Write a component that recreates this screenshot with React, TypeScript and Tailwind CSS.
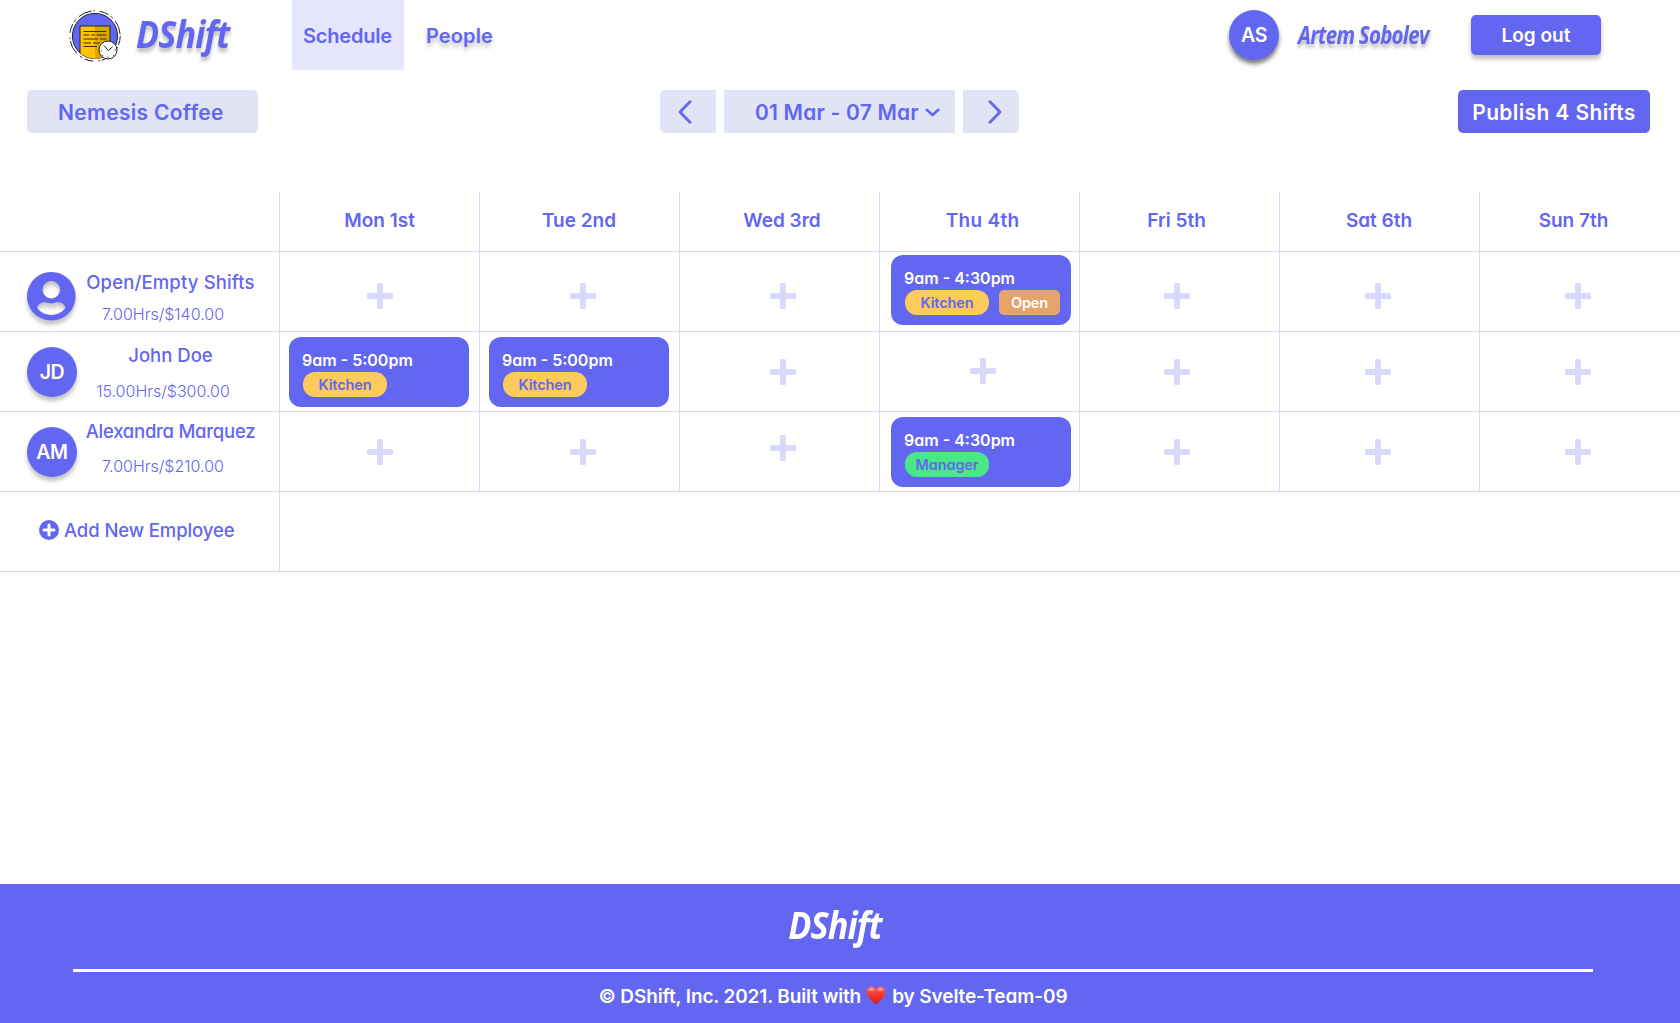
import type { ReactNode } from "react";
import clsx from "clsx";

function LogoMark() {
  return (
    <svg className="mt-px h-[52px] w-[52px]" viewBox="0 0 52 52" fill="none">
      <circle cx="26" cy="26" r="25.2" stroke="#22232f" strokeWidth="1" strokeDasharray="9 2.5 3 4 14 2 1.5 5" />
      <circle cx="26" cy="26" r="22.6" fill="#6366f1" stroke="#22232f" strokeWidth="1" />
      <path d="M11 16H41V42.8A22.2 22.2 0 0 1 11 42.8Z" fill="#ffc400" />
      <path d="M26 16H41V42.8A22.2 22.2 0 0 1 26 48.4Z" fill="#dca600" />
      <path d="M11 42.8V16H41V42.8" stroke="#22232f" strokeWidth="1" />
      <path
        d="M14.5 21.5H37.5M14.5 25H20M22 25H26M27.500 25H37.500M14.500 29H29M31 29H37.500M14.500 33H22M24 33H31M14.500 36.500H28"
        stroke="#3a2f10"
        strokeWidth="1"
      />
      <circle cx="39" cy="40" r="9" fill="#fff" stroke="#22232f" strokeWidth="1" />
      <path d="M35 35.500L39 40.500L43.500 37" stroke="#22232f" strokeWidth="1" />
      <path d="M39 48V46.500M33 46L34.200 45M31.500 41H33M45.200 46L44 45M46.800 40H45.300" stroke="#22232f" strokeWidth=".8" />
    </svg>
  );
}

function PersonIcon() {
  return (
    <svg
      className="h-[49px] w-[49px] overflow-visible drop-shadow-[0_4px_2px_rgba(0,0,0,0.25)]"
      viewBox="0 0 49 49"
      fill="#6366f1"
      fillRule="evenodd"
    >
      <path d="M24.300 0A24.300 24.300 0 1 1 24.290 0ZM24.300 9A8.700 8.700 0 1 0 24.310 9ZM10 35.600C11.500 31.500 15 30 17.500 30.200C20 30.400 21.500 31.400 24.300 31.400C27 31.400 28.500 30.400 31 30.200C33.500 30 37 31.500 38.600 35.600C36 40 30.500 43 24.300 43C18 43 12.500 40 10 35.600Z" />
    </svg>
  );
}

function PlusIcon() {
  return (
    <svg className="h-[26px] w-[26px] shrink-0" viewBox="0 0 26 26" fill="#d9d9fc">
      <path d="M11.600 0H14.400Q16 0 16 1.600V10H24.400Q26 10 26 11.600V14.400Q26 16 24.400 16H16V24.400Q16 26 14.400 26H11.600Q10 26 10 24.400V16H1.600Q0 16 0 14.400V11.600Q0 10 1.600 10H10V1.600Q10 0 11.600 0Z" />
    </svg>
  );
}

function Avatar({ initials, className }: { initials: string; className?: string }) {
  return (
    <div
      className={clsx(
        "flex h-[50px] w-[50px] shrink-0 items-center justify-center rounded-full bg-[#6366f1] pt-0.5 text-[19.500px] font-semibold tracking-[-0.4px] text-white",
        className,
      )}
    >
      {initials}
    </div>
  );
}

function ShiftCard({ time, className, children }: { time: string; className: string; children: ReactNode }) {
  return (
    <div className={clsx("h-[70px] w-[180px] rounded-xl bg-[#6366f1] pt-[13px] pl-[13px]", className)}>
      <p className="text-base leading-5 font-semibold whitespace-nowrap text-white">{time}</p>
      <div className="mt-0.5 ml-px flex gap-2.5 text-[14.500px] font-semibold tracking-[-0.1px]">{children}</div>
    </div>
  );
}

function Role({ name, className }: { name: string; className: string }) {
  return (
    <span className={clsx("flex h-[25px] w-[84px] items-center justify-center rounded-xl pt-px text-[#6366f1]", className)}>
      {name}
    </span>
  );
}

function Cell({ className, children }: { className?: string; children?: ReactNode }) {
  return <div className={clsx("flex border-r border-b border-[#d8d8fb]", className)}>{children}</div>;
}

function EmptyCell({ className }: { className: string }) {
  return (
    <Cell className={clsx("items-center justify-center", className)}>
      <PlusIcon />
    </Cell>
  );
}

function Employee({
  avatar,
  name,
  hours,
  avatarTop,
  nameTop,
  gap,
  tracking,
}: {
  avatar: ReactNode;
  name: string;
  hours: string;
  avatarTop: string;
  nameTop: string;
  gap: string;
  tracking?: string;
}) {
  return (
    <Cell className="pl-[27px]">
      <div className={clsx("w-[50px] shrink-0", avatarTop)}>{avatar}</div>
      <div className={clsx("flex w-[187px] flex-col items-center whitespace-nowrap", nameTop)}>
        <p className={clsx("text-[18.500px] leading-6 font-medium", tracking)}>{name}</p>
        <p className={clsx("pr-[15px] text-base leading-5 font-light", gap)}>{hours}</p>
      </div>
    </Cell>
  );
}

const days = [
  { label: "Mon 1st", className: "" },
  { label: "Tue 2nd", className: "pr-px" },
  { label: "Wed 3rd", className: "pl-[5px]" },
  { label: "Thu 4th", className: "pl-1.5 tracking-[0.3px]" },
  { label: "Fri 5th", className: "pr-1.5" },
  { label: "Sat 6th", className: "pr-px" },
  { label: "Sun 7th", className: "border-r-0 pr-[13px]" },
];

export default function App() {
  return (
    <div className="flex h-[1023px] w-[1680px] flex-col overflow-hidden bg-white font-['Inter',sans-serif] text-[#6366f1] [font-feature-settings:'cv11']">
      <header className="flex h-[70px] items-center">
        <div className="ml-[69px] flex w-[223px] items-center">
          <LogoMark />
          <span className="ml-[15px] inline-block origin-left scale-x-[.9] pb-1 font-['Open_Sans',sans-serif] text-[38px] leading-none font-bold tracking-[-1px] italic [text-shadow:0_4px_4px_rgba(0,0,0,0.25)]">
            DShift
          </span>
        </div>
        <nav className="flex h-full items-center text-xl font-semibold">
          <a className="flex h-full w-28 items-center justify-center bg-[#e6e6fc] pt-px pr-px tracking-[-0.2px]">Schedule</a>
          <a className="ml-[22px] pt-px tracking-[0.1px] [text-shadow:0_4px_4px_rgba(0,0,0,0.25)]">People</a>
        </nav>
        <div className="ml-auto flex items-center pr-[79px]">
          <Avatar initials="AS" className="shadow-[0_4px_4px_rgba(0,0,0,0.5)]" />
          <span className="ml-[19px] inline-block w-[173px] origin-left scale-x-[.82] pb-0.5 font-['Open_Sans',sans-serif] text-[25px] leading-none font-bold tracking-[-0.9px] whitespace-nowrap italic [text-shadow:0_4px_4px_rgba(0,0,0,0.25)]">
            Artem Sobolev
          </span>
          <button className="h-10 w-[130px] rounded-[5px] bg-[#6366f1] pt-0.5 text-[19px] font-semibold text-white shadow-[0_4px_4px_rgba(0,0,0,0.25)]">
            Log out
          </button>
        </div>
      </header>

      <div className="mt-5 flex h-[43px] pr-[30px] pl-[27px] text-[21px] font-semibold">
        <div className="flex w-[231px] items-center rounded-[5px] bg-[#e1e4f4] pt-0.5 pl-[31px] tracking-[0.3px]">Nemesis Coffee</div>
        <div className="mr-auto ml-[402px] flex gap-2">
          <button className="flex w-14 items-center rounded-l-[5px] bg-[#e1e4f4] pl-[18px]">
            <svg className="h-6 w-3.5" viewBox="0 0 14 24" fill="none" stroke="#6366f1" strokeWidth="2.800" strokeLinecap="round" strokeLinejoin="round">
              <path d="M12 1.800L2 12L12 22.200" />
            </svg>
          </button>
          <div className="flex w-[231px] items-center bg-[#e1e4f4] pt-0.5 pl-[31px] tracking-[0.2px] whitespace-nowrap">
            01 Mar - 07 Mar
            <svg className="ml-1.5 h-[9px] w-[15px]" viewBox="0 0 15 9" fill="none" stroke="#6366f1" strokeWidth="2.600" strokeLinecap="round" strokeLinejoin="round">
              <path d="M1.700 1.800L7.500 7L13.300 1.800" />
            </svg>
          </div>
          <button className="flex w-14 items-center rounded-r-[5px] bg-[#e1e4f4] pl-[25px]">
            <svg className="h-6 w-3.5" viewBox="0 0 14 24" fill="none" stroke="#6366f1" strokeWidth="2.800" strokeLinecap="round" strokeLinejoin="round">
              <path d="M2 1.800L12 12L2 22.200" />
            </svg>
          </button>
        </div>
        <button className="w-48 rounded-[5px] bg-[#6366f1] pt-0.5 tracking-[0.37px] text-white">Publish 4 Shifts</button>
      </div>

      <main className="mt-[59px] grid grid-cols-[280px_repeat(7,200px)] grid-rows-[60px_80px_80px_80px_80px]">
        <Cell />
        {days.map((day) => (
          <Cell key={day.label} className={clsx("items-center justify-center pb-px text-[19px] font-semibold", day.className)}>
            {day.label}
          </Cell>
        ))}

        <Employee
          avatar={<PersonIcon />}
          name="Open/Empty Shifts"
          hours="7.00Hrs/$140.00"
          avatarTop="pt-5"
          nameTop="pt-[18px]"
          gap="mt-2.5"
          tracking="tracking-[0.15px]"
        />
        <EmptyCell className="pt-[9px] pl-px" />
        <EmptyCell className="pt-[9px] pl-[7px]" />
        <EmptyCell className="pt-[9px] pl-[7px]" />
        <Cell className="pt-[3px] pl-[11px]">
          <ShiftCard time="9am - 4:30pm" className="shrink-0">
            <Role name="Kitchen" className="bg-[#fdca5c]" />
            <span className="flex w-[61px] items-center justify-center rounded-[5px] bg-[#e4a46c] pt-px text-white">Open</span>
          </ShiftCard>
        </Cell>
        <EmptyCell className="pt-[9px] pr-[5px]" />
        <EmptyCell className="pt-[9px] pr-[3px]" />
        <EmptyCell className="border-r-0 pt-[9px] pr-1" />

        <Employee
          avatar={<Avatar initials="JD" className="shadow-[0_4px_4px_rgba(0,0,0,0.25)]" />}
          name="John Doe"
          hours="15.00Hrs/$300.00"
          avatarTop="pt-[15px]"
          nameTop="pt-[11px]"
          gap="mt-3.5"
        />
        <Cell className="pt-[5px] pl-[9px]">
          <ShiftCard time="9am - 5:00pm" className="shrink-0">
            <Role name="Kitchen" className="bg-[#fdca5c]" />
          </ShiftCard>
        </Cell>
        <Cell className="pt-[5px] pl-[9px]">
          <ShiftCard time="9am - 5:00pm" className="shrink-0">
            <Role name="Kitchen" className="bg-[#fdca5c]" />
          </ShiftCard>
        </Cell>
        <EmptyCell className="pt-px pl-[7px]" />
        <EmptyCell className="pb-px pl-[7px]" />
        <EmptyCell className="pt-px pr-[5px]" />
        <EmptyCell className="pt-px pr-[3px]" />
        <EmptyCell className="border-r-0 pt-px pr-1" />

        <Employee
          avatar={<Avatar initials="AM" className="shadow-[0_4px_4px_rgba(0,0,0,0.25)]" />}
          name="Alexandra Marquez"
          hours="7.00Hrs/$210.00"
          avatarTop="pt-[15px]"
          nameTop="pt-[7px]"
          gap="mt-[13px]"
          tracking="tracking-[-0.25px]"
        />
        <EmptyCell className="pt-px pl-px" />
        <EmptyCell className="pt-px pl-[7px]" />
        <EmptyCell className="pb-[7px] pl-[7px]" />
        <Cell className="pt-[5px] pl-[11px]">
          <ShiftCard time="9am - 4:30pm" className="shrink-0">
            <Role name="Manager" className="bg-[#49e887]" />
          </ShiftCard>
        </Cell>
        <EmptyCell className="pt-px pr-[5px]" />
        <EmptyCell className="pt-px pr-[3px]" />
        <EmptyCell className="border-r-0 pt-px pr-1" />

        <Cell className="items-center pb-[3px] pl-[39px]">
          <svg className="h-5 w-5" viewBox="0 0 20 20">
            <circle cx="10" cy="10" r="10" fill="#6366f1" />
            <path d="M10 5V15M5 10H15" stroke="#fff" strokeWidth="3" strokeLinecap="round" />
          </svg>
          <span className="ml-[5px] pt-px text-[18.500px] font-medium tracking-[-0.1px] whitespace-nowrap">Add New Employee</span>
        </Cell>
        <Cell className="col-span-7 border-r-0" />
      </main>

      <footer className="mt-auto flex h-[139px] flex-col items-center bg-[#6366f1] px-[73px] text-white">
        <span className="mt-[21px] mr-[11px] inline-block scale-x-[.9] font-['Open_Sans',sans-serif] text-[38px] leading-none font-bold tracking-[-1px] italic">
          DShift
        </span>
        <div className="mt-[26px] mr-3.5 h-[2.500px] w-[1520px] shrink-0 bg-white" />
        <p className="mt-[14px] mr-[14px] flex h-6 items-center text-[19px] font-semibold whitespace-nowrap">
          <span className="tracking-[-0.14px]">© DShift, Inc. 2021. Built with</span>
          <svg className="mr-[6px] mb-1 ml-[5px] h-[19px] w-5" viewBox="0 0 20 19">
            <defs>
              <linearGradient id="heart" x1="0" y1="0" x2="0" y2="1">
                <stop offset="0" stopColor="#ff6a5e" />
                <stop offset=".4" stopColor="#fb3b33" />
                <stop offset="1" stopColor="#c81a1a" />
              </linearGradient>
            </defs>
            <path
              d="M10 3.300C8.700 1.300 7 .4 5.200 .4C2.500 .4 .6 2.600 .6 5.700C.6 10.500 5.200 14.500 10 18.600C14.800 14.500 19.400 10.500 19.400 5.700C19.400 2.600 17.500 .4 14.800 .4C13 .4 11.300 1.300 10 3.300Z"
              fill="url(#heart)"
            />
            <ellipse cx="5.300" cy="3.600" rx="2.600" ry="1.500" fill="#ffb3ab" opacity=".8" />
            <ellipse cx="14.500" cy="3.600" rx="2.600" ry="1.500" fill="#ffb3ab" opacity=".8" />
          </svg>
          <span className="tracking-[-0.1px]">by Svelte-Team-09</span>
        </p>
      </footer>
    </div>
  );
}
